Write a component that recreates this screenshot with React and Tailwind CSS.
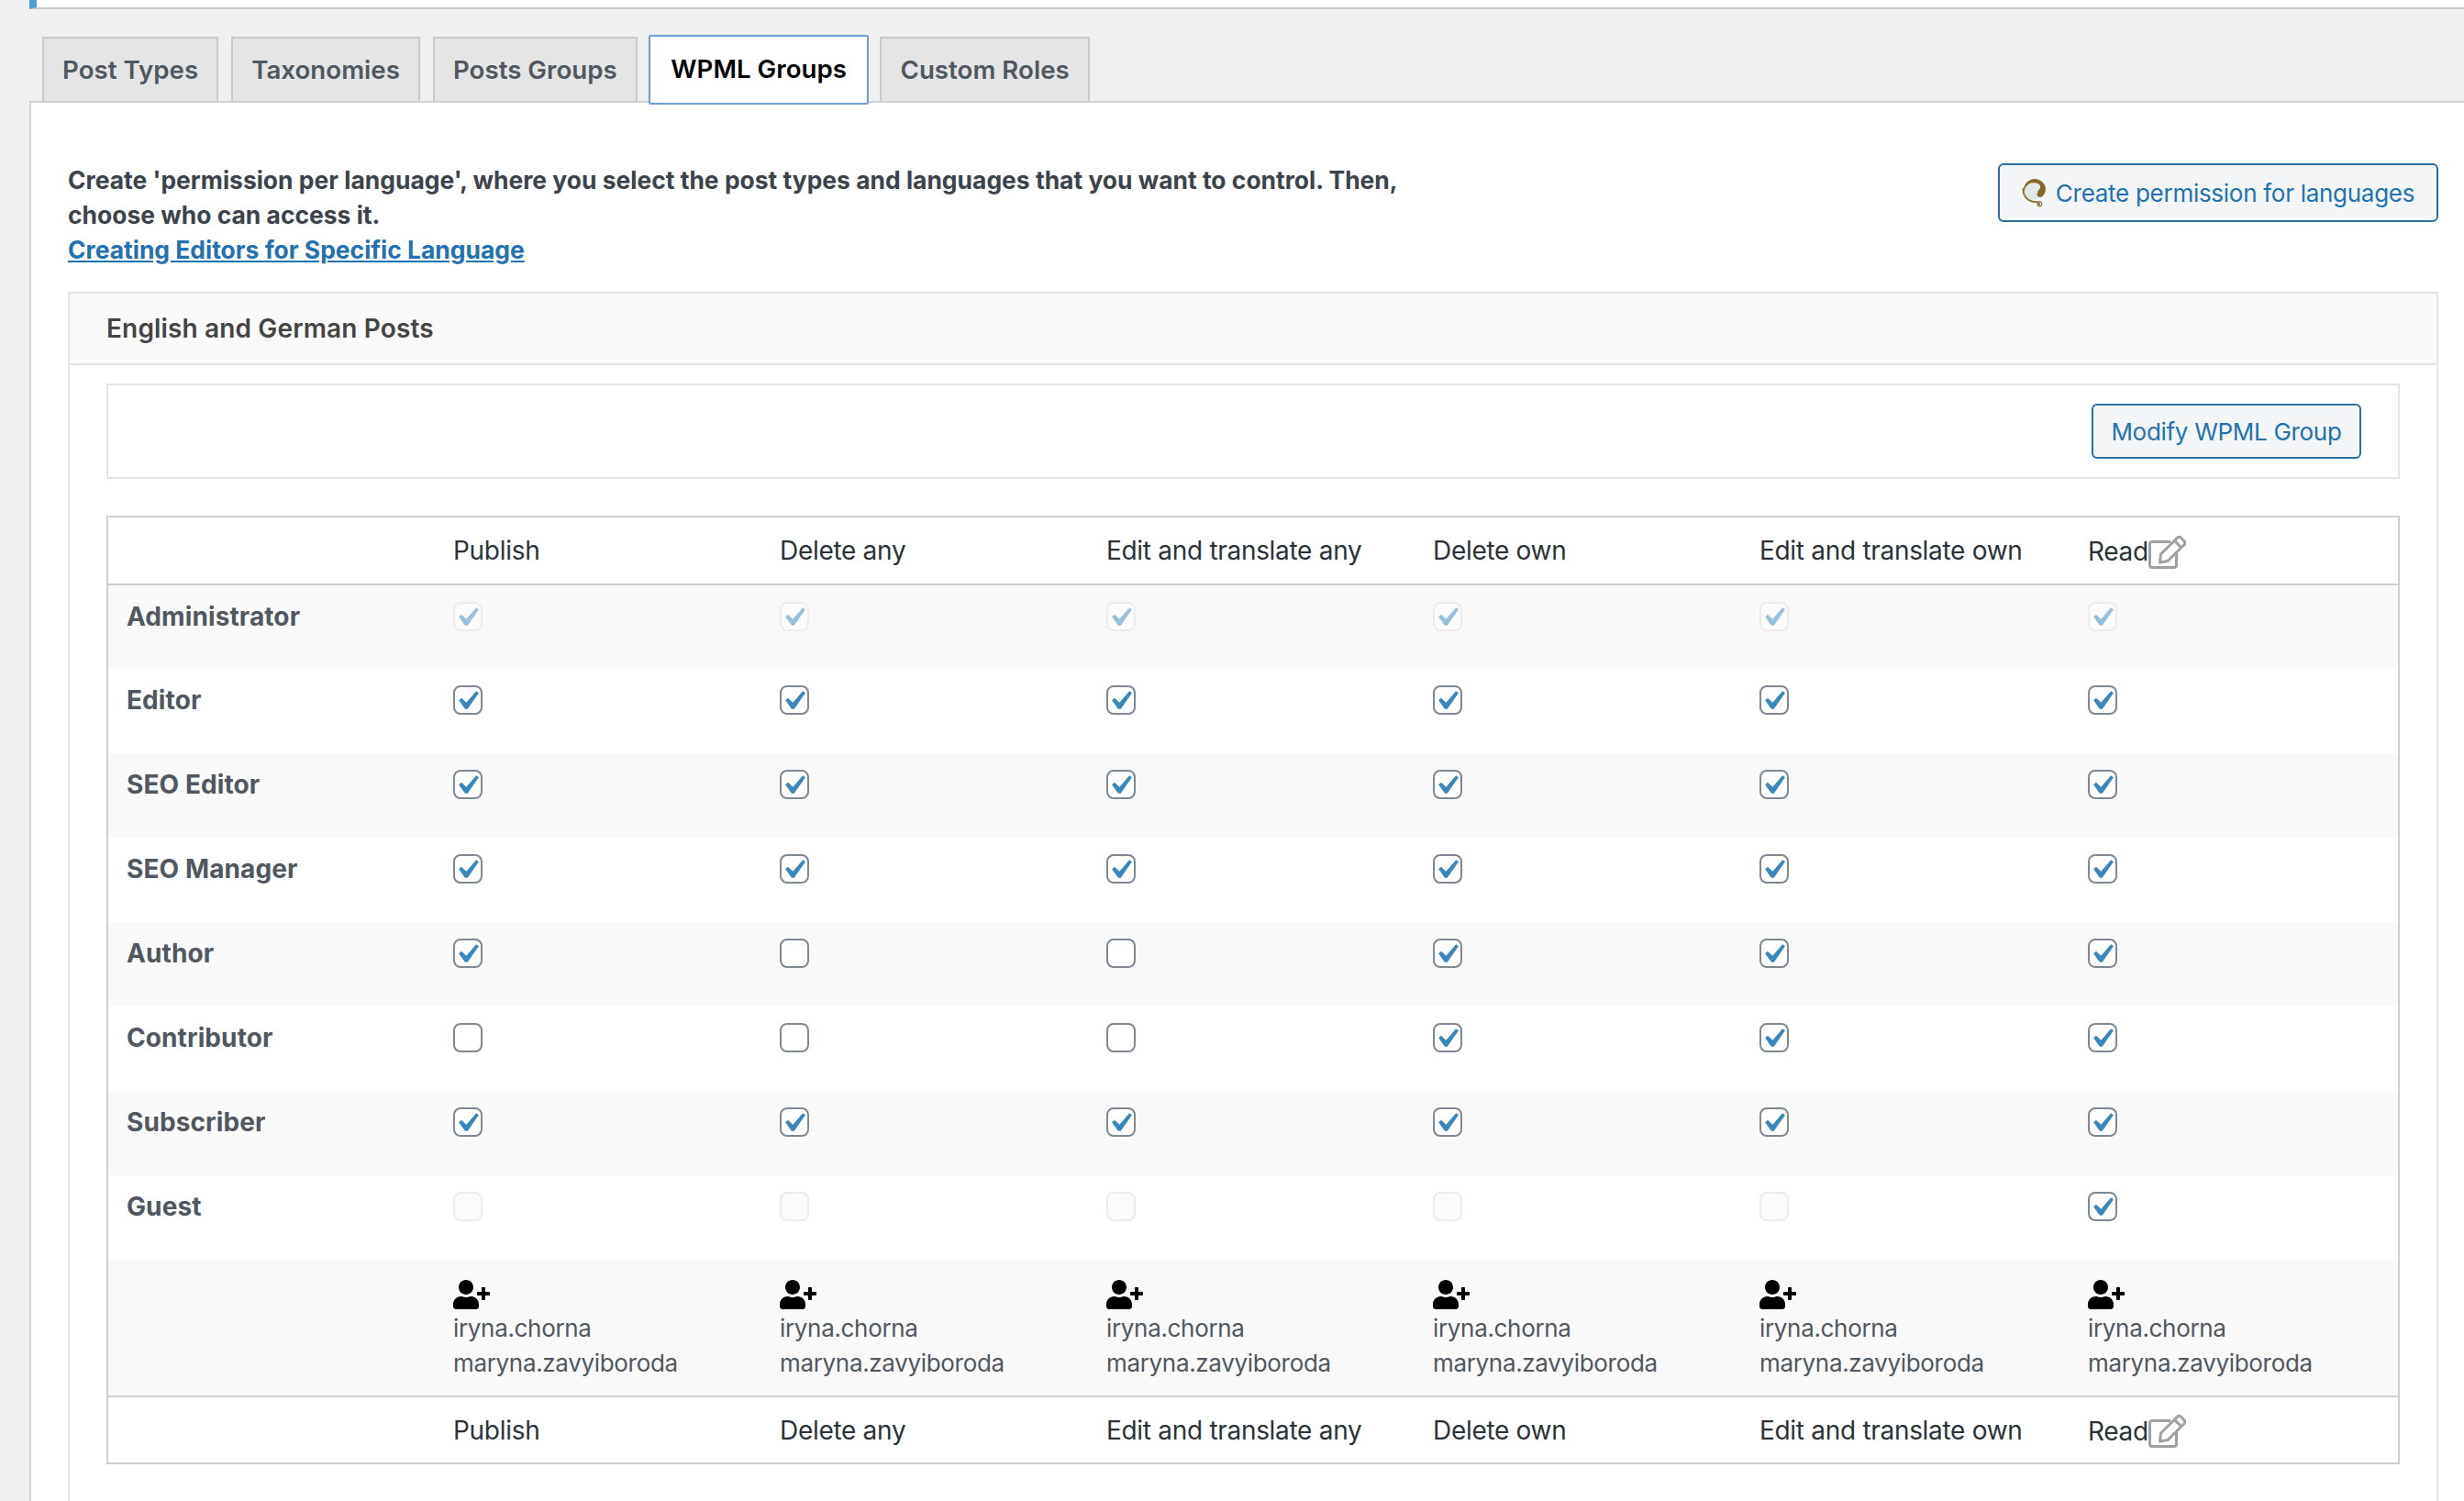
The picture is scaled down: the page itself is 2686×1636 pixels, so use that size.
import React from "react";
import { FaUserPlus } from "react-icons/fa";

const tabs = ["Post Types", "Taxonomies", "Posts Groups", "WPML Groups", "Custom Roles"];
const cols = ["Publish", "Delete any", "Edit and translate any", "Delete own", "Edit and translate own", "Read"];
// c = checked, e = empty, d = disabled checked, x = disabled empty
const rows = [
  ["Administrator", "dddddd"],
  ["Editor", "cccccc"],
  ["SEO Editor", "cccccc"],
  ["SEO Manager", "cccccc"],
  ["Author", "ceeccc"],
  ["Contributor", "eeeccc"],
  ["Subscriber", "cccccc"],
  ["Guest", "xxxxxc"],
];

function Check({ state }) {
  const disabled = state === "d" || state === "x";
  const checked = state === "c" || state === "d";
  return (
    <div
      className={
        "relative w-[32px] h-[32px] rounded-[8px] border-2 " +
        (disabled ? "border-[#ececec] bg-[#fbfbfb]" : "border-[#7e8993] bg-white")
      }
    >
      {checked && (
        <svg
          viewBox="0 0 20 20"
          className={"absolute left-[-8px] top-[-6px] w-[42px] h-[42px] max-w-none " + (disabled ? "opacity-50" : "")}
        >
          <path d="M14.83 4.89l1.34.94-5.81 8.38H9.02L5.78 9.67l1.34-1.25 2.57 2.4z" fill="#3a87bd" />
        </svg>
      )}
    </div>
  );
}

function EditIcon() {
  return (
    <svg viewBox="0 0 41 37" className="w-[41px] h-[37px] shrink-0" fill="none" stroke="#a0a0a0" strokeWidth="3" strokeLinejoin="round">
      <path d="M24 7.5H4A2.5 2.5 0 0 0 1.5 10v23A2.5 2.5 0 0 0 4 35.5h24a2.5 2.5 0 0 0 2.5-2.5V19" />
      <path d="M13.5 21 31.5 3.2a3 3 0 0 1 4 0l3.5 3.5a3 3 0 0 1 0 4L21 28.5l-8.5 1.5z" />
      <path d="M28.5 6.5l7.5 7.500" />
    </svg>
  );
}

function HeaderCells() {
  return (
    <>
      <th className="p-0" />
      {cols.map((c) => (
        <th key={c} className="px-5 py-0 text-left font-normal align-middle text-[#2c3338] tracking-[-0.3px]">
          {c === "Read" ? (
            <span className="inline-flex items-center pt-[2px]">
              Read
              <EditIcon />
            </span>
          ) : (
            c
          )}
        </th>
      ))}
    </>
  );
}

function LobbyIcon() {
  return (
    <svg viewBox="0 0 27 32" className="w-[27px] h-[32px] shrink-0">
      <circle cx="12" cy="14.5" r="9.5" fill="#dfeae7" />
      <path d="M1.8 11C0.5 18 5 24 11 25.5c4 1 7 .5 9 1" fill="none" stroke="#8b7332" strokeWidth="2" />
      <path d="M14 1c6 0 12 5 12 11 0 4-3 9-6 9-3 0-4-3-3-5 1-3 3.500-4 3-7C19.500 5.500 14 4.500 10 5.500 6 6.500 3.500 10 2.500 15 .5 8 7 1 14 1z" fill="#85692a" />
      <circle cx="19.5" cy="28.5" r="2.3" fill="#fff" stroke="#8b7332" strokeWidth="1.2" />
      <circle cx="19" cy="28.5" r="1" fill="#4a3c17" />
    </svg>
  );
}

export default function App() {
  return (
    <div
      className="w-[2686px] h-[1636px] overflow-hidden bg-[#f0f0f1] pl-[32px] flex flex-col text-[28px] text-[#3c434a]"
      style={{ fontFamily: "Inter, 'Liberation Sans', sans-serif" }}
    >
      <div className="h-[10px] shrink-0 bg-white border-l-[8px] border-l-[#4b9fd5] border-b-[2px] border-b-[#c9ccce]" />

      <div className="h-[100px] shrink-0 pt-[30px] pl-[14px] flex items-start gap-[14px] text-[27.7px]">
        {tabs.map((t) =>
          t === "WPML Groups" ? (
            <div
              key={t}
              className="relative z-10 mx-[-1.5px] mt-[-2px] h-[76px] px-[22px] flex items-center bg-white border-2 border-[#6d9fd6] rounded-[2px] font-semibold text-black whitespace-nowrap"
            >
              {t}
            </div>
          ) : (
            <div
              key={t}
              className="h-[72px] px-[20px] flex items-center pb-[1px] bg-[#e5e5e5] border-2 border-b-0 border-[#c9c9ca] font-semibold text-[#50575e] whitespace-nowrap"
            >
              {t}
            </div>
          )
        )}
      </div>

      <div className="flex-1 bg-white border-t-2 border-l-2 border-[#d0d1d3] pl-[40px] pr-[28px] pt-[66px]">
        <div className="flex justify-between items-start mb-[26px]">
          <div className="max-w-[1500px] -mt-[1px] mb-[1px] leading-[38px] font-bold text-[26.45px]">
            <p>Create 'permission per language', where you select the post types and languages that you want to control. Then, choose who can access it.</p>
            <a className="underline text-[#2271b1]">Creating Editors for Specific Language</a>
          </div>
          <button className="h-[64px] w-[480px] flex items-center justify-center gap-[10px] rounded-[6px] border-2 border-[#2c6e9f] bg-[#f3f5f6] text-[#2271b1] text-[26px] tracking-[-0.28px]">
            <LobbyIcon />
            Create permission for languages
          </button>
        </div>

        <div className="h-[1400px] border-2 border-[#e5e5e5]">
          <div className="h-[78px] flex items-center pl-[40px] pb-[1px] bg-[#f9f9f9] border-b-2 border-[#e5e5e5] font-semibold text-[#444] tracking-[0.15px]">
            English and German Posts
          </div>
          <div className="px-[40px] pt-[20px]">
            <div className="h-[104px] border-2 border-[#e5e5e5] flex items-center justify-end pr-[40px]">
              <button className="h-[60px] w-[294px] rounded-[6px] border-2 border-[#2c6e9f] bg-[#f3f5f6] text-[#2271b1] text-[26px] tracking-[-0.3px]">
                Modify WPML Group
              </button>
            </div>

            <table className="mt-[40px] w-full table-fixed border-2 border-[#ccd0d4]">
              <colgroup>
                <col className="w-[357px]" />
                <col className="w-[356px]" />
                <col className="w-[356px]" />
                <col className="w-[356px]" />
                <col className="w-[356px]" />
                <col className="w-[358px]" />
                <col />
              </colgroup>
              <thead>
                <tr className="h-[74px] border-b-2 border-[#ccd0d4]">
                  <HeaderCells />
                </tr>
              </thead>
              <tbody>
                {rows.map(([name, states], i) => (
                  <tr key={name} className={"h-[92px] " + (i % 2 === 0 ? "bg-[#f9f9f9]" : "bg-white")}>
                    <td className="px-5 pt-[18px] align-top font-bold text-[#50575e] leading-[32px] tracking-[0.1px]">{name}</td>
                    {states.split("").map((s, j) => (
                      <td key={j} className="px-5 pt-[18px] align-top">
                        <Check state={s} />
                      </td>
                    ))}
                  </tr>
                ))}
                <tr className="h-[149px] bg-[#f9f9f9] border-b-2 border-[#ccd0d4]">
                  <td />
                  {cols.map((c) => (
                    <td key={c} className="px-5 align-top pt-[22px] text-[#50575e] text-[26px] leading-[38px] tracking-[-0.33px]">
                      <FaUserPlus className="w-[40px] h-[32px] text-black" />
                      <div className="mt-[2px]">iryna.chorna</div>
                      <div>maryna.zavyiboroda</div>
                    </td>
                  ))}
                </tr>
              </tbody>
              <tfoot>
                <tr className="h-[73px]">
                  <HeaderCells />
                </tr>
              </tfoot>
            </table>
          </div>
        </div>
      </div>
    </div>
  );
}
